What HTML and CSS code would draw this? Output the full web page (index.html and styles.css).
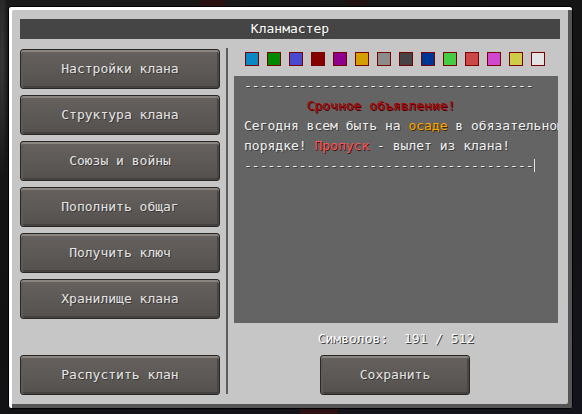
FILE: index.html
```html
<!DOCTYPE html>
<html lang="ru">
<head>
<meta charset="utf-8">
<title>Кланмастер</title>
<link rel="stylesheet" href="styles.css">
</head>
<body>
<div class="panel">
  <div class="title">Кланмастер</div>
  <div class="main">
    <div class="left">
      <div class="btn">Настройки клана</div>
      <div class="btn">Структура клана</div>
      <div class="btn">Союзы и войны</div>
      <div class="btn">Пополнить общаг</div>
      <div class="btn">Получить ключ</div>
      <div class="btn">Хранилище клана</div>
      <div class="btn btn-bottom">Распустить клан</div>
    </div>
    <div class="divider"></div>
    <div class="right">
      <div class="swatches">
        <span class="sw c1"></span><span class="sw c2"></span><span class="sw c3"></span><span class="sw c4"></span><span class="sw c5"></span><span class="sw c6"></span><span class="sw c7"></span><span class="sw c8"></span><span class="sw c9"></span><span class="sw c10"></span><span class="sw c11"></span><span class="sw c12"></span><span class="sw c13"></span><span class="sw c14"></span>
      </div>
      <div class="editor">
        <div class="line">-------------------------------------</div>
        <div class="line">        <span class="darkred">Срочное объявление!</span></div>
        <div class="line">Сегодня всем быть на <span class="gold">осаде</span> в обязательном</div>
        <div class="line">порядке! <span class="red">Пропуск</span> - вылет из клана!</div>
        <div class="line">-------------------------------------<span class="cursor"></span></div>
      </div>
      <div class="counter">Символов:  191 / 512</div>
      <div class="btn btn-save">Сохранить</div>
    </div>
  </div>
</div>
</body>
</html>
```
FILE: styles.css
```css
html, body {
  margin: 0;
  padding: 0;
}
body {
  width: 582px;
  height: 414px;
  overflow: hidden;
  background:
    radial-gradient(ellipse 6px 120px at 2px 60px, #3a3a3a, transparent),
    linear-gradient(90deg, transparent 200px, #2a1010 200px, #2a1010 225px, transparent 225px, transparent 348px, #221010 348px, #221010 367px, transparent 367px) top / 100% 6px no-repeat,
    linear-gradient(90deg, transparent 300px, #2c1012 300px, #2c1012 338px, transparent 338px) bottom / 100% 5px no-repeat,
    linear-gradient(160deg, #1a1a1a 0%, #121212 50%, #13131c 100%);
  font-family: "DejaVu Sans Mono", "Liberation Mono", monospace;
  font-size: 13px;
  color: #e0e0e0;
}
.panel {
  box-sizing: border-box;
  margin: 6px 0 0 8px;
  width: 565px;
  height: 403px;
  border: 1px solid #000;
  background: #c6c6c6;
  box-shadow: inset 3px 3px 0 #ffffff, inset -4px -4px 0 #555555;
  padding: 12px 12px 0 11px;
  border-radius: 3px;
}
.title {
  height: 20px;
  line-height: 20px;
  background: #454545;
  color: #ffffff;
  text-align: center;
  text-shadow: 1px 1px 0 #3a3a3a;
}
.main {
  display: flex;
  margin-top: 10px;
  height: 346px;
}
.left {
  width: 200px;
  display: flex;
  flex-direction: column;
  gap: 6px;
}
.btn {
  box-sizing: border-box;
  height: 40px;
  line-height: 38px;
  text-align: center;
  color: #e4e4e4;
  text-shadow: 1px 1px 0 #3b3836;
  border: 1px solid #2a2826;
  border-radius: 3px;
  background: linear-gradient(#67625f, #54504d);
  box-shadow: inset 0 2px 0 #8b8580, inset 2px 0 0 #5e5a57, inset 0 -2px 0 #45413f, inset -2px 0 0 #4a4643;
}
.btn-bottom {
  margin-top: auto;
}
.divider {
  width: 2px;
  margin: -1px 6px 1px 6px;
  background: #5c5c5c;
}
.right {
  width: 324px;
  display: flex;
  flex-direction: column;
}
.swatches {
  display: flex;
  gap: 8px;
  padding-left: 11px;
  margin-top: 3px;
  height: 14px;
}
.sw {
  box-sizing: border-box;
  width: 14px;
  height: 14px;
  border: 1px solid #7a0000;
}
.c1 { background: #0a88c4; }
.c2 { background: #008a00; }
.c3 { background: #4848d0; }
.c4 { background: #860000; }
.c5 { background: #8c008c; }
.c6 { background: #d4a000; }
.c7 { background: #8c8c8c; }
.c8 { background: #444444; }
.c9 { background: #003494; }
.c10 { background: #44cc44; }
.c11 { background: #cc4848; }
.c12 { background: #d048d0; }
.c13 { background: #d0cc48; }
.c14 { background: #e4e4e4; }
.editor {
  box-sizing: border-box;
  margin-top: 10px;
  height: 247px;
  background: #646464;
  padding: 0 0 0 10px;
  overflow: hidden;
  line-height: 20px;
  color: #f0f0f0;
  text-shadow: 1px 1px 0 #3c3c3c;
}
.line {
  height: 20px;
  white-space: pre;
}
.darkred {
  color: #b00000;
  text-shadow: 1px 1px 0 #4a0000;
}
.gold {
  color: #ffaa00;
  text-shadow: 1px 1px 0 #3f2a00;
}
.red {
  color: #ff5555;
  text-shadow: 1px 1px 0 #3f1515;
}
.cursor {
  display: inline-block;
  width: 1px;
  height: 13px;
  background: #e0e0e0;
  vertical-align: -2px;
}
.counter {
  margin-top: 6px;
  height: 20px;
  line-height: 20px;
  text-align: center;
  white-space: pre;
  color: #ffffff;
  text-shadow: 1px 1px 0 #3f3f3f;
}
.btn-save {
  width: 150px;
  margin-top: 6px;
  margin-left: 86px;
}
```
